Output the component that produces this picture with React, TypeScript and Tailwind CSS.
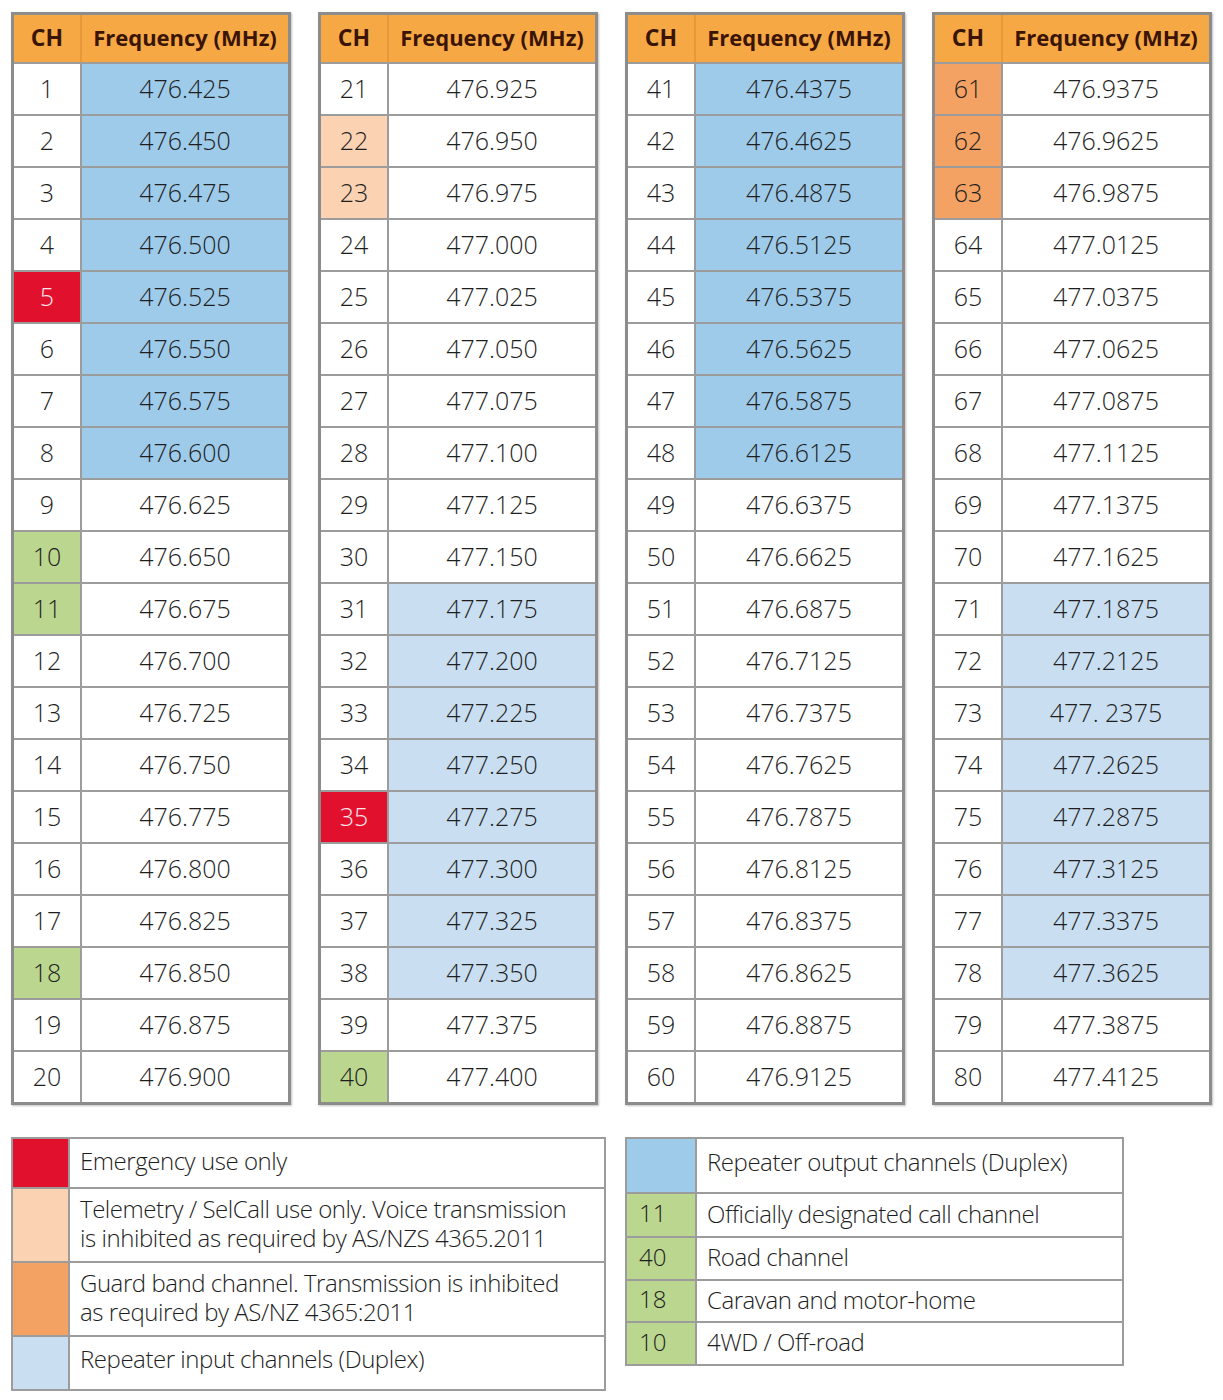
import React from "react";

const WHITE = "bg-white";
const BLUE = "bg-[#9ecbea]";
const LBLUE = "bg-[#c9dff1]";
const RED = "bg-[#e1112e]";
const PEACH = "bg-[#fbd3b3]";
const ORANGE = "bg-[#f3a264]";
const GREEN = "bg-[#bbd68f]";

type Row = { ch: number; freq: string; chBg: string; fBg: string; chWhite?: boolean };

function build(start: number, base: number, step: number, decimals: number, scale: number): Row[] {
  const rows: Row[] = [];
  for (let i = 0; i < 20; i++) {
    const ch = start + i;
    let freq = ((base + step * i) / scale).toFixed(decimals);
    if (ch === 73) freq = "477. 2375";
    let chBg = WHITE;
    let fBg = WHITE;
    let chWhite = false;
    if (ch === 5 || ch === 35) {
      chBg = RED;
      chWhite = true;
    }
    if (ch === 10 || ch === 11 || ch === 18 || ch === 40) chBg = GREEN;
    if (ch === 22 || ch === 23) chBg = PEACH;
    if (ch >= 61 && ch <= 63) chBg = ORANGE;
    if ((ch >= 1 && ch <= 8) || (ch >= 41 && ch <= 48)) fBg = BLUE;
    if ((ch >= 31 && ch <= 38) || (ch >= 71 && ch <= 78)) fBg = LBLUE;
    rows.push({ ch, freq, chBg, fBg, chWhite });
  }
  return rows;
}

const tables: Row[][] = [
  build(1, 476425, 25, 3, 1000),
  build(21, 476925, 25, 3, 1000),
  build(41, 4764375, 250, 4, 10000),
  build(61, 4769375, 250, 4, 10000),
];

function ChannelTable({ rows }: { rows: Row[] }) {
  return (
    <div className="w-[280px] border-[3px] border-[#8c8c8c] shadow-[1px_1px_2px_rgba(0,0,0,0.25)]">
      <div className="flex h-[47px] bg-[#f6a845] text-[#3a1405] font-bold text-[22px]">
        <div className="w-[66px] flex items-center justify-center pb-[2px] text-[23px]">CH</div>
        <div className="w-[2px] bg-[#e8973a]" />
        <div className="flex-1 flex items-center justify-center pb-[2px]">Frequency (MHz)</div>
      </div>
      {rows.map((r) => (
        <div key={r.ch} className="border-t-2 border-[#9c9c9c] flex h-[52px] text-[25px] font-[350] text-[#1e1e1e]">
          <div
            className={`w-[66px] flex items-center justify-center ${r.chBg} ${r.chWhite ? "text-[#fde4ea]" : ""}`}
          >
            {r.ch}
          </div>
          <div className="w-[2px] bg-[#9c9c9c]" />
          <div className={`flex-1 flex items-center justify-center ${r.fBg}`}>{r.freq}</div>
        </div>
      ))}
    </div>
  );
}

function LegendRow({
  swatch,
  label,
  h,
  first,
  text,
  pb = "pb-[4px]",
}: {
  swatch: string;
  label?: string;
  h: string;
  first?: boolean;
  text: React.ReactNode;
  pb?: string;
}) {
  return (
    <div className={`flex ${h} ${first ? "" : "border-t-2 border-[#9c9c9c]"}`}>
      <div className={`${swatch} shrink-0 flex items-center pl-[12px] tracking-normal ${pb}`}>{label}</div>
      <div className="w-[2px] shrink-0 bg-[#9c9c9c]" />
      <div className={`flex-1 min-w-0 flex items-center pl-[10px] leading-[29px] whitespace-nowrap ${pb}`}>{text}</div>
    </div>
  );
}

export default function App() {
  return (
    <div className="w-[1223px] h-[1400px] bg-white pl-[11px] pt-[12px] font-['Open_Sans',sans-serif] text-[#1e1e1e]">
      <div className="flex gap-[27px]">
        {tables.map((t, i) => (
          <ChannelTable key={i} rows={t} />
        ))}
      </div>
      <div className="flex gap-[19px] mt-[32px] items-start text-[24px] font-[350] tracking-[-0.45px]">
        <div className="w-[595px] border-2 border-[#9c9c9c]">
          <LegendRow first swatch={`${RED} w-[55px] h-full`} h="h-[48px]" pb="pb-[6px]" text="Emergency use only" />
          <LegendRow
            swatch={`${PEACH} w-[55px] h-full`}
            h="h-[74px]"
            text={
              <span>
                Telemetry / SelCall use only. Voice transmission
                <br />
                is inhibited as required by AS/NZS 4365.2011
              </span>
            }
          />
          <LegendRow
            swatch={`${ORANGE} w-[55px] h-full`}
            h="h-[74px]"
            text={
              <span>
                Guard band channel. Transmission is inhibited
                <br />
                as required by AS/NZ 4365:2011
              </span>
            }
          />
          <LegendRow swatch={`${LBLUE} w-[55px] h-full`} h="h-[54px]" pb="pb-[10px]" text="Repeater input channels (Duplex)" />
        </div>
        <div className="w-[499px] border-2 border-[#9c9c9c]">
          <LegendRow first swatch={`${BLUE} w-[68px] h-full`} h="h-[53px]" pb="pb-[8px]" text="Repeater output channels (Duplex)" />
          <LegendRow swatch={`${GREEN} w-[68px] h-full`} label="11" h="h-[44px]" text="Officially designated call channel" />
          <LegendRow swatch={`${GREEN} w-[68px] h-full`} label="40" h="h-[43px]" text="Road channel" />
          <LegendRow swatch={`${GREEN} w-[68px] h-full`} label="18" h="h-[42px]" text="Caravan and motor-home" />
          <LegendRow swatch={`${GREEN} w-[68px] h-full`} label="10" h="h-[43px]" text="4WD / Off-road" />
        </div>
      </div>
    </div>
  );
}
